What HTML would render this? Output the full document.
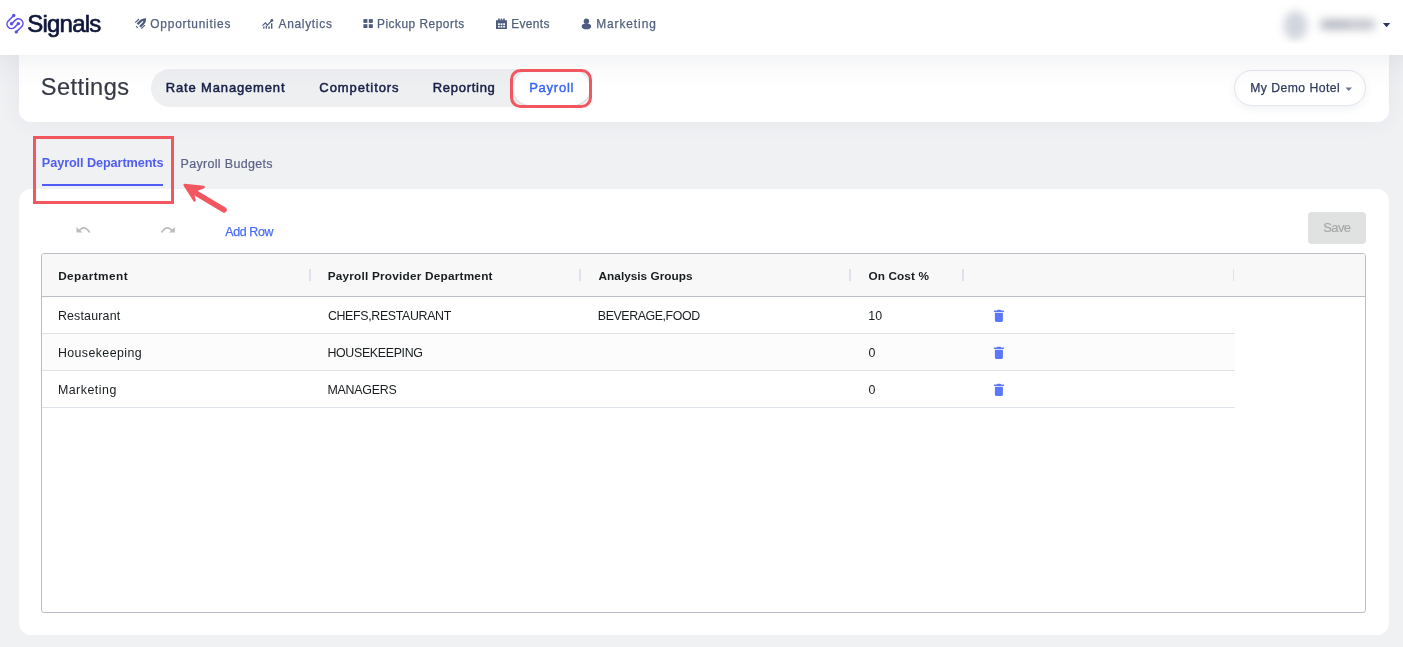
<!DOCTYPE html>
<html lang="en">
<head>
<meta charset="utf-8">
<title>Signals - Settings - Payroll Departments</title>
<style>
*{box-sizing:border-box;margin:0;padding:0}
html,body{width:1403px;height:647px;overflow:hidden}
body{background:#f0f1f3;font-family:"Liberation Sans",sans-serif;position:relative}
.abs{position:absolute}
.t{position:absolute;white-space:nowrap;display:block}
#hdr{left:0;top:0;width:1403px;height:55px;background:#fff;z-index:3}
#hdrshadow{left:0;top:55px;width:1403px;height:34px;z-index:4;pointer-events:none;
  background:linear-gradient(to bottom,rgba(60,65,90,0.055),rgba(60,65,90,0.02) 45%,rgba(60,65,90,0) 100%)}
#setcard{left:19px;top:40px;width:1370px;height:82px;background:#fff;border-radius:12px;box-shadow:0 0 22px rgba(40,50,80,0.06);z-index:1}
#pills{left:151px;top:69px;width:441px;height:38px;border-radius:19px;background:#eeeff1;z-index:2}
#pillact{left:513px;top:71px;width:77px;height:34px;border-radius:17px;background:#fff;box-shadow:0 1px 3px rgba(0,0,0,0.12);z-index:2}
#redpill{left:510px;top:68.5px;width:82.3px;height:39.4px;border:3.4px solid #f2565f;border-radius:10.5px;z-index:6}
#hotel{left:1234px;top:70px;width:132px;height:36px;border-radius:18px;border:1px solid #e2e5ed;background:#fff;box-shadow:0 3px 8px rgba(60,70,110,0.07);z-index:2}
#maincard{left:19px;top:189px;width:1370px;height:446px;background:#fff;border-radius:12px;z-index:1}
#tabline{left:42px;top:183.5px;width:121px;height:2.5px;background:#4f5df5;z-index:5}
#redtab{left:33px;top:136px;width:141px;height:68px;border:3px solid #f2565f;z-index:6}
#save{left:1308px;top:212px;width:58px;height:32px;border-radius:4px;background:#e0e2e2;z-index:2}
#grid{left:41px;top:253px;width:1325px;height:360px;border:1px solid #babfc7;border-radius:3px;background:#fff;z-index:2}
#ghead{left:42px;top:254px;width:1323px;height:43px;background:#f8f8f8;border-bottom:1px solid #babfc7;border-radius:2px 2px 0 0;z-index:3}
.row{left:42px;width:1193px;height:37px;border-bottom:1px solid #dde2eb;z-index:3}
.sep{width:1.6px;height:12px;top:269px;background:#dde2eb;z-index:4}
#texts{position:absolute;left:0;top:0;width:1403px;height:647px;z-index:7;will-change:transform}
svg{position:absolute;overflow:visible;z-index:7}
</style>
</head>
<body>
<div class="abs" id="setcard"></div>
<div class="abs" id="hdr"></div>
<div class="abs" id="hdrshadow"></div>
<div class="abs" id="pills"></div>
<div class="abs" id="pillact"></div>
<div class="abs" id="redpill"></div>
<div class="abs" id="hotel"></div>
<div class="abs" id="maincard"></div>
<div class="abs" id="tabline"></div>
<div class="abs" id="redtab"></div>
<div class="abs" id="save"></div>
<div class="abs" id="grid"></div>
<div class="abs" id="ghead"></div>
<div class="abs row" style="top:297px;background:#fff"></div>
<div class="abs row" style="top:334px;background:#fcfcfc"></div>
<div class="abs row" style="top:371px;background:#fff"></div>
<div class="abs sep" style="left:309.2px"></div>
<div class="abs sep" style="left:579.2px"></div>
<div class="abs sep" style="left:849.2px"></div>
<div class="abs sep" style="left:962.4px"></div>
<div class="abs sep" style="left:1232.5px"></div>

<!-- all icons -->
<svg width="1403" height="647" viewBox="0 0 1403 647" style="left:0;top:0">
  <!-- logo -->
  <g fill="none" stroke="#5b50f0" stroke-width="1.55" stroke-linecap="round">
    <path d="M13.7 15.5 L8.22 20.97 A4.5 4.5 0 0 0 14.58 27.33 L18.4 23.5"/>
    <path d="M13.7 15.5 L8.22 20.97 A4.5 4.5 0 0 0 14.58 27.33 L18.4 23.5" transform="rotate(180 15 23.7)"/>
  </g>
  <g fill="#5b50f0">
    <circle cx="13.7" cy="15.5" r="1.7"/><circle cx="18.4" cy="23.6" r="1.7"/>
    <circle cx="16.3" cy="31.9" r="1.7"/><circle cx="11.6" cy="23.8" r="1.7"/>
  </g>
  <!-- rocket (opportunities) -->
  <g transform="translate(135 18)" fill="#4d5c7d" stroke="none">
    <path d="M11.2 0.2 C8 0.1 5.900 1.100 4.500 2.500 L1.700 5.400 L3.300 7 L7.500 2.900 L8.400 3.800 L4.200 7.900 L5.800 9.500 L8.700 6.700 C10.100 5.300 11.100 3.300 11.200 0.200 Z"/>
    <path d="M-0.100 4.200 L3.500 0.600 L4.300 1.400 L0.700 5 Z"/>
    <path d="M5.900 10.300 L9.500 6.700 L10.300 7.500 L6.700 11.100 Z"/>
    <path d="M0.700 8.600 L1.500 7.800 L3.100 9.400 L2.300 10.200 Z"/>
  </g>
  <!-- analytics -->
  <g transform="translate(262 19)" fill="#4d5c7d">
    <rect x="1.200" y="7.500" width="1.300" height="2.200"/>
    <rect x="3.700" y="6.600" width="1.300" height="3.100"/>
    <rect x="6.300" y="7.400" width="1.500" height="2.300"/>
    <rect x="9" y="4.300" width="1.400" height="5.400"/>
    <path d="M0.500 6.600 L3.400 3.800 L5.400 6.200 L9.900 1.500" fill="none" stroke="#4d5c7d" stroke-width="1.150"/>
    <circle cx="9.900" cy="1.450" r="1.350"/>
  </g>
  <!-- grid (pickup) -->
  <g fill="#4d5c7d">
    <rect x="363.4" y="19.1" width="4" height="3.8"/><rect x="368.8" y="19.1" width="4" height="3.8"/>
    <rect x="363.4" y="24.2" width="4" height="3.8"/><rect x="368.8" y="24.2" width="4" height="3.8"/>
  </g>
  <!-- calendar (events) -->
  <g fill="#4d5c7d">
    <rect x="496" y="20.2" width="10.9" height="8.8"/>
    <rect x="498.1" y="18.6" width="1.7" height="2"/><rect x="500.6" y="18.6" width="1.7" height="2"/><rect x="503.1" y="18.6" width="1.7" height="2"/>
  </g>
  <g fill="#fff">
    <rect x="498" y="23.3" width="1.8" height="1.7"/><rect x="500.6" y="23.3" width="1.8" height="1.7"/><rect x="503.2" y="23.3" width="1.8" height="1.7"/>
    <rect x="498" y="25.8" width="1.8" height="1.7"/><rect x="500.6" y="25.8" width="1.8" height="1.7"/><rect x="503.2" y="25.8" width="1.8" height="1.7"/>
  </g>
  <!-- user (marketing) -->
  <g fill="#4f5e80">
    <circle cx="586.4" cy="21.2" r="2.7"/>
    <ellipse cx="586.4" cy="26.4" rx="4.7" ry="2.8"/>
  </g>
  <!-- user blurred -->
  <g filter="url(#blur)">
    <ellipse cx="1295.500" cy="25.500" rx="12" ry="14.500" fill="#d2d5de"/>
    <rect x="1320" y="19" width="55" height="11" rx="3" fill="#c4c7cf"/><rect x="1324" y="21" width="24" height="7" rx="3" fill="#b4b7c1"/>
  </g>
  <defs><filter id="blur" x="-30%" y="-150%" width="160%" height="400%"><feGaussianBlur stdDeviation="4"/></filter></defs>
  <rect x="1381" y="4" width="14" height="46" fill="#fff"/><rect x="1270" y="43.500" width="125" height="11" fill="#fff"/>
  <path d="M1382.900 23 L1390.200 23 L1386.550 27.200 Z" fill="#2c3859"/>
  <!-- hotel caret -->
  <path d="M1345.5 87.6 L1352 87.6 L1348.75 91 Z" fill="#6c7896"/>
  <!-- undo / redo -->
  <g fill="none" stroke="#bcbcbc" stroke-width="1.600">
    <path d="M78.600 231.400 Q84.200 223.800 89.800 232.500"/>
    <path d="M172.700 231.400 Q167.100 223.800 161.400 232.500"/>
  </g>
  <path d="M76.500 227 L76.500 232.600 L82.300 232.600 Z" fill="#bcbcbc"/>
  <path d="M174.800 227 L174.800 232.600 L169 232.600 Z" fill="#bcbcbc"/>
  <!-- trash icons -->
  <g fill="#5b78fd">
    <path d="M994.900 312.800 H1002.900 V320.600 Q1002.900 321.900 1001.600 321.900 H996.200 Q994.900 321.900 994.900 320.600 Z"/>
    <path d="M993.900 310.500 H996.700 L997.400 309.700 H1000.400 L1001.100 310.500 H1003.900 V311.900 H993.900 Z"/>
  </g>
  <g fill="#5b78fd" transform="translate(0 37)">
    <path d="M994.900 312.800 H1002.900 V320.600 Q1002.900 321.900 1001.600 321.900 H996.200 Q994.900 321.900 994.900 320.600 Z"/>
    <path d="M993.900 310.500 H996.700 L997.400 309.700 H1000.400 L1001.100 310.500 H1003.900 V311.900 H993.900 Z"/>
  </g>
  <g fill="#5b78fd" transform="translate(0 74)">
    <path d="M994.900 312.800 H1002.900 V320.600 Q1002.900 321.900 1001.600 321.900 H996.200 Q994.900 321.900 994.900 320.600 Z"/>
    <path d="M993.900 310.500 H996.700 L997.400 309.700 H1000.400 L1001.100 310.500 H1003.900 V311.900 H993.900 Z"/>
  </g>
  <!-- red arrow -->
  <g stroke="#f2565f" fill="#f2565f" stroke-linecap="round" stroke-linejoin="round">
    <path d="M224 209.800 L193 191.300" stroke-width="5.600" fill="none"/>
    <path d="M184.700 185 L203.600 187 L196.800 189.800 L193 194.600 L194.500 200.400 Z" stroke-width="2.600"/>
  </g>
</svg>
<div id="texts"><span class="t" style="left:27.15px;top:8.00px;font-size:24px;line-height:31px;font-weight:400;color:#0f1639;letter-spacing:-0.758px;-webkit-text-stroke:0.65px #0f1639">Signals</span>
<span class="t" style="left:150.35px;top:17.00px;font-size:11.9px;line-height:15px;font-weight:400;color:#53607e;letter-spacing:0.775px;-webkit-text-stroke:0.25px #53607e">Opportunities</span>
<span class="t" style="left:278.55px;top:17.00px;font-size:11.9px;line-height:15px;font-weight:400;color:#53607e;letter-spacing:0.712px;-webkit-text-stroke:0.25px #53607e">Analytics</span>
<span class="t" style="left:376.95px;top:17.00px;font-size:11.9px;line-height:15px;font-weight:400;color:#53607e;letter-spacing:0.508px;-webkit-text-stroke:0.25px #53607e">Pickup Reports</span>
<span class="t" style="left:511.15px;top:17.00px;font-size:11.9px;line-height:15px;font-weight:400;color:#53607e;letter-spacing:0.390px;-webkit-text-stroke:0.25px #53607e">Events</span>
<span class="t" style="left:596.15px;top:17.00px;font-size:11.9px;line-height:15px;font-weight:400;color:#53607e;letter-spacing:0.938px;-webkit-text-stroke:0.25px #53607e">Marketing</span>
<span class="t" style="left:40.80px;top:72.00px;font-size:23.6px;line-height:31px;font-weight:400;color:#363a47;letter-spacing:0.421px;-webkit-text-stroke:0.2px #363a47">Settings</span>
<span class="t" style="left:165.75px;top:79.00px;font-size:13.0px;line-height:17px;font-weight:400;color:#172046;letter-spacing:0.846px;-webkit-text-stroke:0.5px #172046">Rate Management</span>
<span class="t" style="left:319.35px;top:79.00px;font-size:13.0px;line-height:17px;font-weight:400;color:#172046;letter-spacing:0.915px;-webkit-text-stroke:0.5px #172046">Competitors</span>
<span class="t" style="left:432.75px;top:79.00px;font-size:13.0px;line-height:17px;font-weight:400;color:#172046;letter-spacing:0.712px;-webkit-text-stroke:0.5px #172046">Reporting</span>
<span class="t" style="left:529.15px;top:79.00px;font-size:13.0px;line-height:17px;font-weight:400;color:#3565fa;letter-spacing:0.758px;-webkit-text-stroke:0.42px #3565fa">Payroll</span>
<span class="t" style="left:1250.15px;top:80.00px;font-size:12.2px;line-height:16px;font-weight:400;color:#2f3b5f;letter-spacing:0.471px;-webkit-text-stroke:0.25px #2f3b5f">My Demo Hotel</span>
<span class="t" style="left:41.85px;top:155.00px;font-size:12.7px;line-height:17px;font-weight:700;color:#4f5df5;letter-spacing:-0.097px">Payroll Departments</span>
<span class="t" style="left:180.55px;top:156.00px;font-size:12.5px;line-height:16px;font-weight:400;color:#5b6385;letter-spacing:0.314px;-webkit-text-stroke:0.2px #5b6385">Payroll Budgets</span>
<span class="t" style="left:225.25px;top:224.00px;font-size:12.4px;line-height:16px;font-weight:400;color:#4a6cf5;letter-spacing:-0.358px;-webkit-text-stroke:0.25px #4a6cf5">Add Row</span>
<span class="t" style="left:1323.30px;top:219.00px;font-size:13px;line-height:17px;font-weight:400;color:#a6a8a8;letter-spacing:-0.617px;-webkit-text-stroke:0.15px #a6a8a8">Save</span>
<span class="t" style="left:58.15px;top:269.00px;font-size:11.8px;line-height:15px;font-weight:700;color:#181d1f;letter-spacing:0.433px">Department</span>
<span class="t" style="left:327.65px;top:269.00px;font-size:11.8px;line-height:15px;font-weight:700;color:#181d1f;letter-spacing:0.213px">Payroll Provider Department</span>
<span class="t" style="left:598.55px;top:269.00px;font-size:11.8px;line-height:15px;font-weight:700;color:#181d1f;letter-spacing:0.014px">Analysis Groups</span>
<span class="t" style="left:868.40px;top:269.00px;font-size:11.8px;line-height:15px;font-weight:700;color:#181d1f;letter-spacing:0.119px">On Cost %</span>
<span class="t" style="left:57.90px;top:308.00px;font-size:12.4px;line-height:16px;font-weight:400;color:#181d1f;letter-spacing:0.189px">Restaurant</span>
<span class="t" style="left:327.90px;top:308.00px;font-size:12.4px;line-height:16px;font-weight:400;color:#181d1f;letter-spacing:-0.340px">CHEFS,RESTAURANT</span>
<span class="t" style="left:597.80px;top:308.00px;font-size:12.4px;line-height:16px;font-weight:400;color:#181d1f;letter-spacing:-0.421px">BEVERAGE,FOOD</span>
<span class="t" style="left:868.15px;top:308.00px;font-size:12.4px;line-height:16px;font-weight:400;color:#181d1f;letter-spacing:0.100px">10</span>
<span class="t" style="left:57.90px;top:345.00px;font-size:12.4px;line-height:16px;font-weight:400;color:#181d1f;letter-spacing:0.405px">Housekeeping</span>
<span class="t" style="left:327.40px;top:345.00px;font-size:12.4px;line-height:16px;font-weight:400;color:#181d1f;letter-spacing:-0.327px">HOUSEKEEPING</span>
<span class="t" style="left:868.40px;top:345.00px;font-size:12.4px;line-height:16px;font-weight:400;color:#181d1f;letter-spacing:0.000px">0</span>
<span class="t" style="left:57.90px;top:382.00px;font-size:12.4px;line-height:16px;font-weight:400;color:#181d1f;letter-spacing:0.506px">Marketing</span>
<span class="t" style="left:327.40px;top:382.00px;font-size:12.4px;line-height:16px;font-weight:400;color:#181d1f;letter-spacing:-0.214px">MANAGERS</span>
<span class="t" style="left:868.40px;top:382.00px;font-size:12.4px;line-height:16px;font-weight:400;color:#181d1f;letter-spacing:0.000px">0</span></div>
</body>
</html>
